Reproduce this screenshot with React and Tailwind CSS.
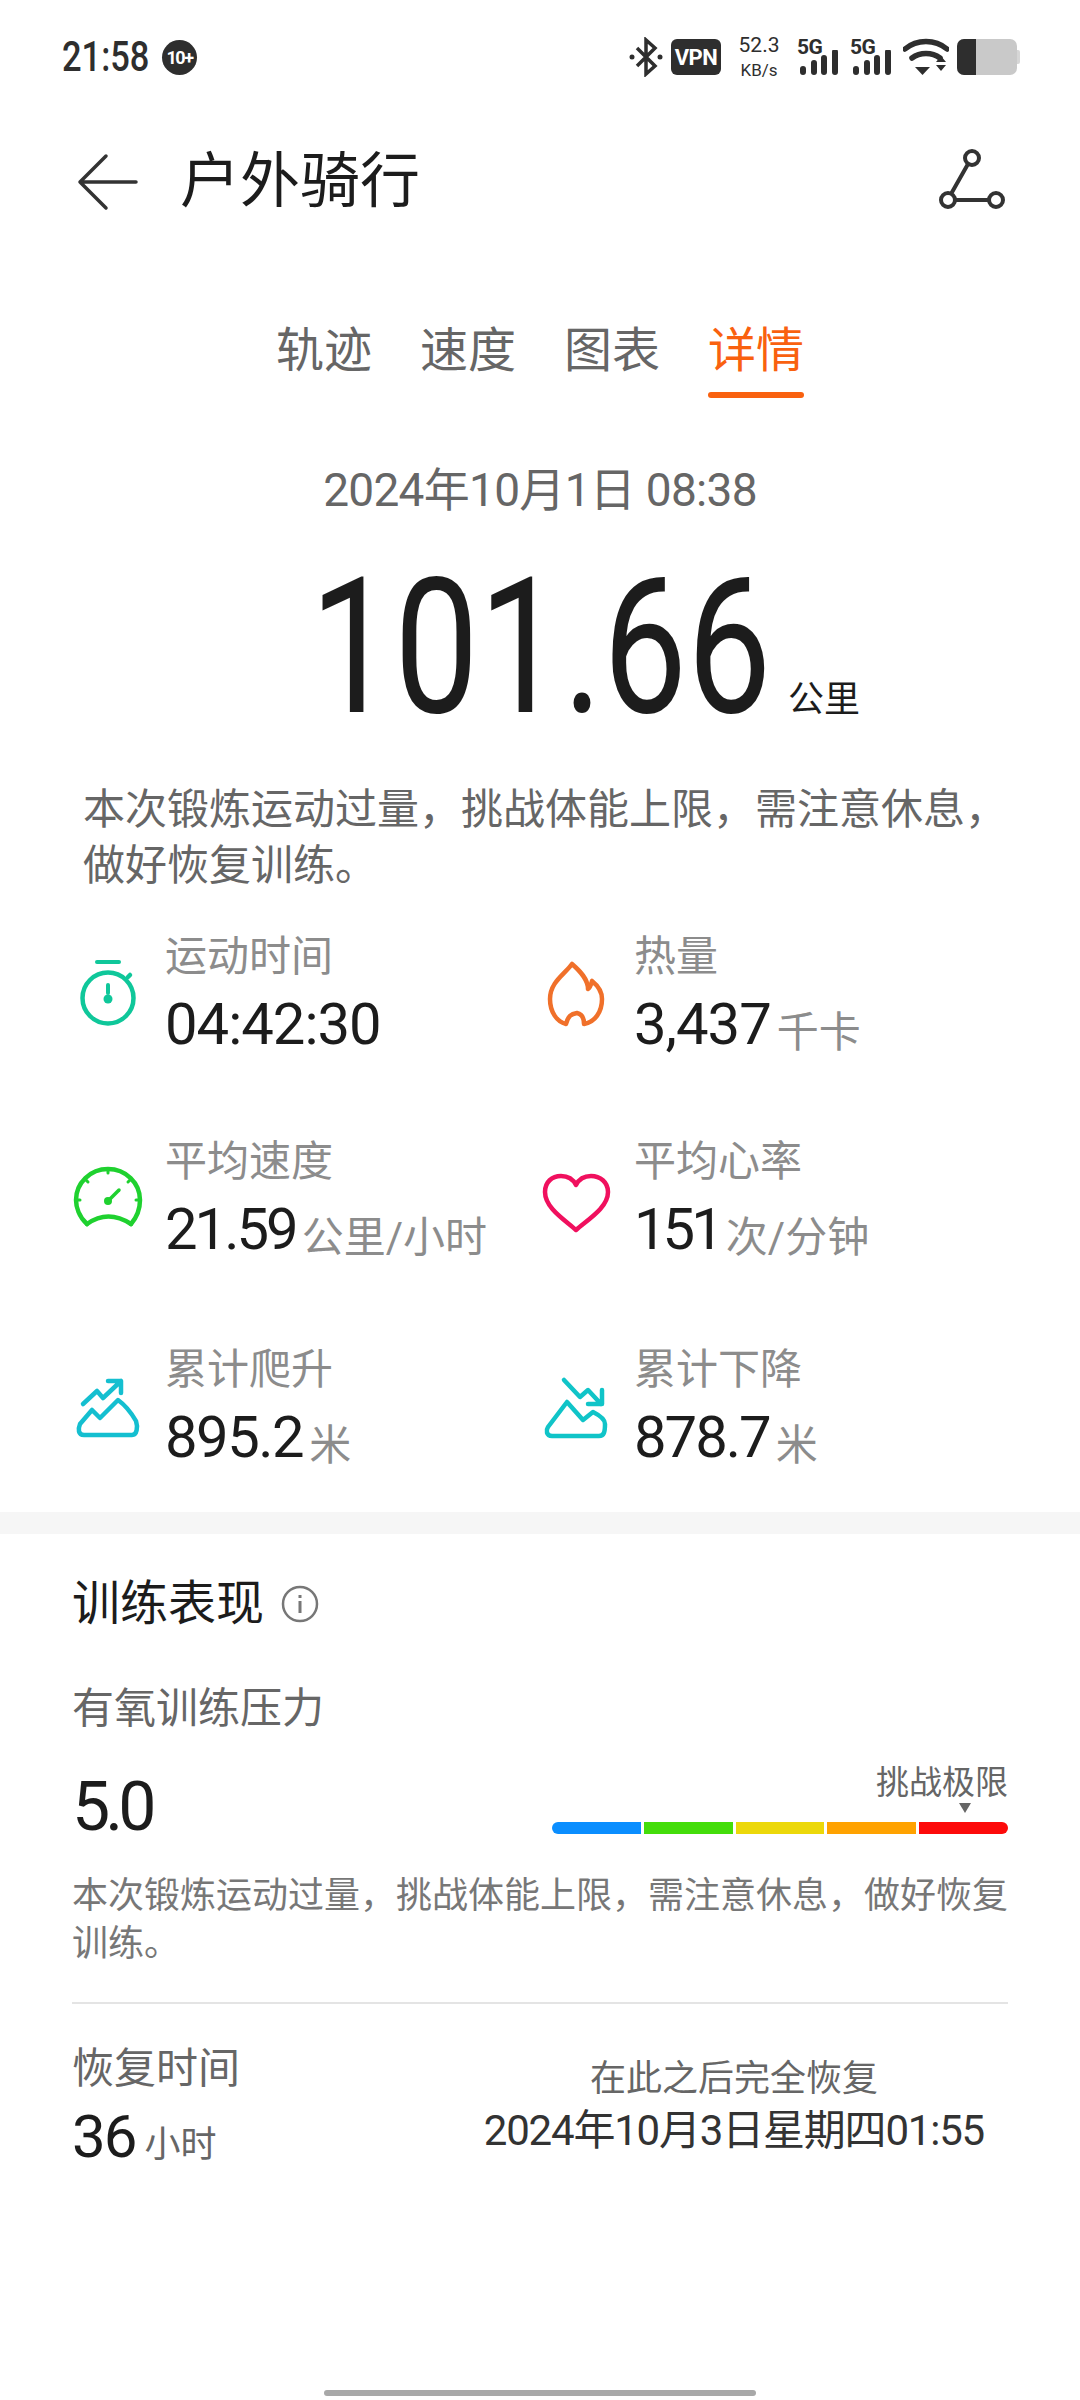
const font = { fontFamily: '"Roboto", "Noto Sans CJK SC", sans-serif' };

function Signal() {
  return (
    <div className="flex flex-col items-start w-[43px] h-[38px]">
      <span className="text-[21px] leading-[18px] font-bold text-[#2e2e2e] tracking-[-0.5px]">5G</span>
      <svg width="43" height="26" viewBox="0 0 43 26" className="-mt-[6px]">
        <g stroke="#2e2e2e" strokeWidth="6" strokeLinecap="round">
          <path d="M6 19v3M17 13v9M27 8v14M38 2v20" />
        </g>
      </svg>
    </div>
  );
}

function StatusBar() {
  return (
    <div className="h-[114px] flex items-center pl-[62px] pr-[60px] text-[#2e2e2e]">
      <div className="w-[85px] h-[50px]">
        <span className="inline-block origin-left scale-x-[.82] text-[42px] leading-[50px] font-medium whitespace-nowrap">21:58</span>
      </div>
      <div className="ml-[15px] w-[35px] h-[35px] rounded-full bg-[#2e2e2e] text-white text-[18px] font-bold flex items-center justify-center tracking-[-1.5px]">
        10+
      </div>
      <div className="ml-auto flex items-center">
        <svg width="34" height="40" viewBox="0 0 34 40">
          <path d="M8 11l18 18-9 8V3l9 8-18 18" fill="none" stroke="#2e2e2e" strokeWidth="3.500" />
          <circle cx="3" cy="20" r="2.500" fill="#2e2e2e" />
          <circle cx="31" cy="20" r="2.500" fill="#2e2e2e" />
        </svg>
        <div className="ml-[8px] w-[50px] h-[36px] rounded-[6px] bg-[#2e2e2e] text-white text-[22px] font-bold flex items-center justify-center tracking-[-0.5px]">
          VPN
        </div>
        <div className="ml-[18px] w-[40px] flex flex-col items-center">
          <span className="text-[21px] leading-[26px]">52.3</span>
          <span className="text-[17px] leading-[24px]">KB/s</span>
        </div>
        <div className="ml-[18px]"><Signal /></div>
        <div className="ml-[10px]"><Signal /></div>
        <svg width="46" height="38" viewBox="0 0 46 38" className="ml-[10px]">
          <path d="M2 11c12-10 30-10 42 0" fill="none" stroke="#2e2e2e" strokeWidth="5.500" strokeLinecap="round" />
          <path d="M9 20c8-6 20-6 28 0" fill="none" stroke="#2e2e2e" strokeWidth="5.500" strokeLinecap="round" />
          <path d="M12 29h15l-7.500 8zM33 24l5-6 5 6zM33 27h10l-5 6z" fill="#2e2e2e" />
        </svg>
        <div className="ml-[8px] w-[60px] h-[36px] rounded-[7px] bg-[#c9c9c9] overflow-hidden">
          <div className="w-[19px] h-full bg-[#2e2e2e]" />
        </div>
        <div className="w-[3px] h-[14px] bg-[#d6d6d6] rounded-r-[2px]" />
      </div>
    </div>
  );
}

function TitleBar() {
  return (
    <div className="h-[136px] flex items-center pl-[76px] pr-[74px]">
      <svg width="62" height="60" viewBox="0 0 62 60">
        <path d="M30 4L4 30l26 26M4 30h56" fill="none" stroke="#333" strokeWidth="3.500" strokeLinecap="round" strokeLinejoin="round" />
      </svg>
      <h1 className="ml-[42px] text-[60px] leading-[72px] font-normal text-[#1c1c1c]">户外骑行</h1>
      <svg width="68" height="68" viewBox="0 0 68 68" className="ml-auto">
        <g fill="none" stroke="#333" strokeWidth="4">
          <circle cx="34" cy="10" r="7" />
          <circle cx="10" cy="52" r="7" />
          <circle cx="58" cy="52" r="7" />
          <path d="M30 16L13 46M17 52h34" />
        </g>
      </svg>
    </div>
  );
}

function Tabs() {
  const tabs = ["轨迹", "速度", "图表", "详情"];
  return (
    <div className="mt-[60px] flex justify-center gap-[48px]">
      {tabs.map((t, i) => (
        <div key={t} className="w-[96px] h-[88px] flex flex-col items-center">
          <span className={i === 3 ? "h-[82px] text-[48px] leading-[82px] text-[#f9610f]" : "h-[82px] text-[48px] leading-[82px] text-[#666]"}>{t}</span>
          {i === 3 && <div className="w-[96px] h-[6px] rounded-full bg-[#f9610f]" />}
        </div>
      ))}
    </div>
  );
}

function Stopwatch() {
  return (
    <svg width="80" height="80" viewBox="0 0 80 80">
      <g fill="none" stroke="#0fc79a" strokeWidth="4.500" strokeLinecap="round">
        <path d="M29 8h22" strokeWidth="4" />
        <circle cx="40" cy="44" r="25.500" />
        <path d="M40 31v8" strokeWidth="4" />
        <path d="M60 23l2-2" />
      </g>
      <circle cx="40" cy="45" r="4.500" fill="#0fc79a" />
    </svg>
  );
}

function Gauge() {
  return (
    <svg width="80" height="80" viewBox="0 0 80 80">
      <g fill="none" stroke="#1fd12f" strokeWidth="4.500" strokeLinecap="round" strokeLinejoin="round">
        <path d="M19 67C11 60 8 50 8 43a32 31 0 0 1 64 0c0 8-3 17-9 24" />
        <path d="M19 67q21-15 44 0" />
        <path d="M40 12v4M17 22l3 3M63 22l-3 3M8 43h4M72 43h-4" strokeWidth="3" />
        <path d="M40 44l11-11" strokeWidth="3.500" />
      </g>
      <circle cx="40" cy="44" r="4" fill="#1fd12f" />
    </svg>
  );
}

function Flame() {
  return (
    <svg width="80" height="80" viewBox="0 0 80 80">
      <path
        d="M35 10C28 20 13 28 13 45c0 13 7 23 16 25 2-8 5-10 11-11 5 1 7 5 7 11 11-2 18-12 18-25 0-8-5-14-10-18-1 4-2 7-4 8 0-10-8-18-16-25z"
        fill="none"
        stroke="#f0702a"
        strokeWidth="4.500"
        strokeLinejoin="round"
      />
    </svg>
  );
}

function Heart() {
  return (
    <svg width="80" height="80" viewBox="0 0 80 80">
      <path
        d="M39 67C28 57 8 45 8 29c0-10 7-16 16-16 6 0 12 3 15 9 3-6 9-9 15-9 9 0 17 6 17 16 0 16-21 28-32 38z"
        fill="none"
        stroke="#f0105e"
        strokeWidth="4.500"
        strokeLinejoin="round"
      />
    </svg>
  );
}

function Climb() {
  return (
    <svg width="80" height="80" viewBox="0 0 80 80">
      <g fill="none" stroke="#14bfd0" strokeWidth="4.500" strokeLinecap="round" strokeLinejoin="round">
        <path d="M15 36l14-13 6 7 18-17M40 13h13v12" />
        <path d="M16 67c-6 0-6-6-4-11l12-14 8 8 18-18c7 5 14 14 18 21 2 6 1 14-4 14z" />
      </g>
    </svg>
  );
}

function Descent() {
  return (
    <svg width="80" height="80" viewBox="0 0 80 80">
      <g fill="none" stroke="#10c4c8" strokeWidth="4.500" strokeLinecap="round" strokeLinejoin="round">
        <path d="M27 12l16 17 8-7 13 14M65 22v14H51" />
        <path d="M15 68c-6 0-6-6-4-9l19-25 16 18 10-8c6 3 12 7 12 12 0 8-1 12-6 12z" />
      </g>
    </svg>
  );
}

function Stat({ icon, label, value, unit, iconTop, tracking }) {
  return (
    <div className="flex h-[127px]">
      <div className={iconTop + " w-[80px] h-[80px] shrink-0"}>{icon}</div>
      <div className="ml-[17px]">
        <div className="text-[42px] leading-[50px] text-[#8c8c8c]">{label}</div>
        <div className="mt-[7px] flex items-baseline h-[70px]">
          <span className={tracking + " text-[58px] leading-[70px] text-[#1c1c1c]"}>{value}</span>
          <span className="ml-[6px] translate-y-[3px] text-[42px] leading-[70px] text-[#8c8c8c]">{unit}</span>
        </div>
      </div>
    </div>
  );
}

function Summary() {
  return (
    <div>
      <div className="mt-[62px] h-[60px] text-center text-[46px] leading-[60px] text-[#666] tracking-[-0.7px]">
        2024年10月1日 08:38
      </div>
      <div className="mt-[42px] pl-[310px] h-[165px] flex items-baseline">
        <div className="w-[460px] h-[170px] shrink-0">
          <div className="inline-block origin-left scale-x-[.79] text-[190px] leading-[170px] text-[#1c1c1c] whitespace-nowrap">101.66</div>
        </div>
        <span className="ml-[18px] text-[36px] text-[#1c1c1c]">公里</span>
      </div>
      <p className="mt-[55px] pl-[83px] pr-[70px] text-[42px] leading-[56px] text-[#666]">
        本次锻炼运动过量，挑战体能上限，需注意休息，做好恢复训练。
      </p>
      <div className="mt-[38px] pl-[68px] grid grid-cols-[469px_1fr]">
        <Stat icon={<Stopwatch />} iconTop="mt-[22px]" tracking="tracking-[-1px]" label="运动时间" value="04:42:30" />
        <Stat icon={<Flame />} iconTop="mt-[22px]" tracking="tracking-[-1px]" label="热量" value="3,437" unit="千卡" />
        <div className="col-span-2 h-[78px]" />
        <Stat icon={<Gauge />} iconTop="mt-[20px]" tracking="tracking-[-3px]" label="平均速度" value="21.59" unit="公里/小时" />
        <Stat icon={<Heart />} iconTop="mt-[26px]" tracking="tracking-[-4px]" label="平均心率" value="151" unit="次/分钟" />
        <div className="col-span-2 h-[81px]" />
        <Stat icon={<Climb />} iconTop="mt-[23px]" tracking="tracking-[-1.5px]" label="累计爬升" value="895.2" unit="米" />
        <Stat icon={<Descent />} iconTop="mt-[23px]" tracking="tracking-[-2px]" label="累计下降" value="878.7" unit="米" />
      </div>
    </div>
  );
}

function Performance() {
  const bars = [
    "bg-[#0a8eff] rounded-l-full",
    "bg-[#44dd0a]",
    "bg-[#ecd80a]",
    "bg-[#ffa200]",
    "bg-[#fd0a0a] rounded-r-full",
  ];
  return (
    <div className="px-[72px]">
      <div className="mt-[40px] flex items-center h-[60px]">
        <h2 className="text-[48px] leading-[60px] font-normal text-[#1c1c1c]">训练表现</h2>
        <svg width="40" height="40" viewBox="0 0 40 40" className="ml-[16px]">
          <circle cx="20" cy="20" r="17" fill="none" stroke="#777" strokeWidth="2.500" />
          <path d="M20 17v12M20 11v3" stroke="#777" strokeWidth="3" />
        </svg>
      </div>
      <div className="mt-[47px] text-[42px] leading-[56px] text-[#666]">有氧训练压力</div>
      <div className="mt-[26px] flex justify-between">
        <span className="mt-[4px] text-[68px] leading-[80px] text-[#1c1c1c] tracking-[-5px]">5.0</span>
        <div className="w-[456px] flex flex-col">
          <div className="h-[40px] text-right text-[33px] leading-[40px] text-[#666]">挑战极限</div>
          <svg width="12" height="10" viewBox="0 0 12 10" className="ml-[407px]">
            <path d="M0 0h12L6 10z" fill="#666" />
          </svg>
          <div className="mt-[9px] flex gap-[3px] h-[12px]">
            {bars.map((b) => (
              <div key={b} className={b + " flex-1"} />
            ))}
          </div>
        </div>
      </div>
      <p className="mt-[25px] text-[36px] leading-[48px] text-[#777]">
        本次锻炼运动过量，挑战体能上限，需注意休息，做好恢复训练。
      </p>
      <div className="mt-[34px] h-[2px] bg-[#e4e4e4]" />
      <div className="mt-[37px] flex justify-between">
        <div>
          <div className="text-[42px] leading-[56px] text-[#666]">恢复时间</div>
          <div className="mt-[5px] flex items-baseline">
            <span className="text-[60px] leading-[70px] text-[#1c1c1c] tracking-[-2px]">36</span>
            <span className="ml-[9px] text-[36px] text-[#666]">小时</span>
          </div>
        </div>
        <div className="mr-[24px] pt-[12px] text-center">
          <div className="text-[36px] leading-[52px] text-[#666]">在此之后完全恢复</div>
          <div className="text-[42px] leading-[52px] text-[#333] tracking-[-1.200px]">2024年10月3日星期四01:55</div>
        </div>
      </div>
    </div>
  );
}

export default function App() {
  return (
    <div style={font} className="w-[1080px] h-[2400px] bg-white flex flex-col overflow-hidden">
      <StatusBar />
      <TitleBar />
      <Tabs />
      <Summary />
      <div className="mt-[40px] h-[22px] shrink-0 bg-[#f6f6f6]" />
      <Performance />
      <div className="mt-auto mb-[4px] mx-auto w-[432px] h-[6px] rounded-full bg-[#a8a8a8]" />
    </div>
  );
}
